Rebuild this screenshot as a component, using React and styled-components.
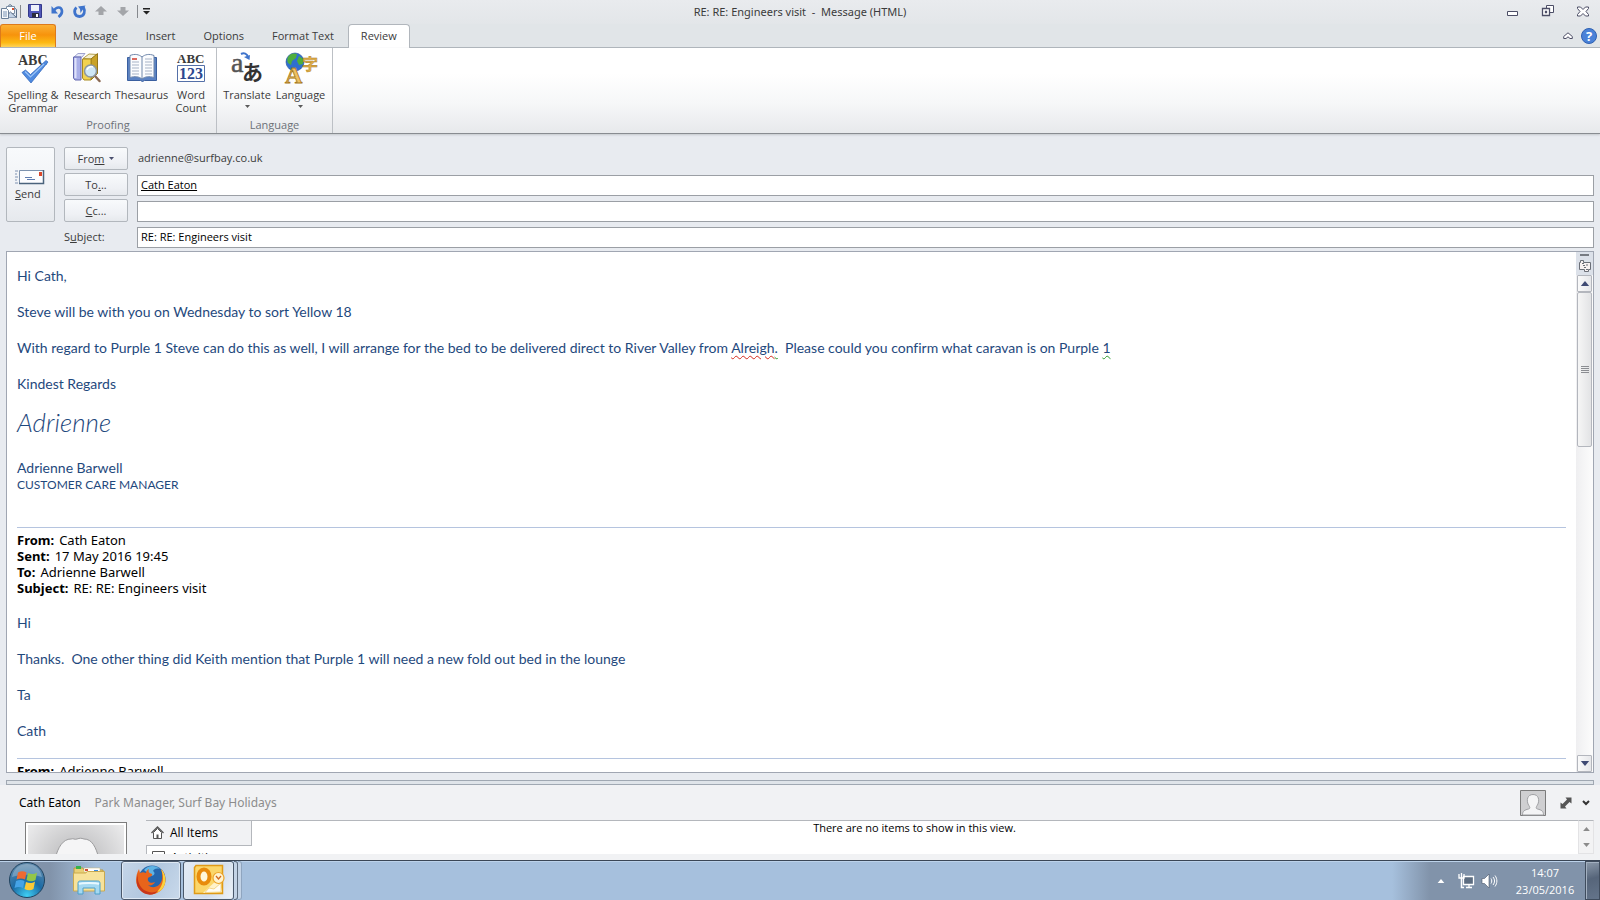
import React, { useState } from 'react'
import styled, { createGlobalStyle } from 'styled-components'

const GlobalStyle = createGlobalStyle`
    * {
        box-sizing: border-box;
    }
    body {
        margin: 0;
        overflow: hidden;
        font-family: "Open Sans", "Noto Sans", sans-serif;
        font-size: 11px;
        color: #3b3b3b;
    }
    button, input {
        font: inherit;
        color: inherit;
        margin: 0;
    }
    svg {
        display: block;
        flex: none;
        overflow: visible;
    }
`

const Screen = styled.div`
    display: flex;
    flex-direction: column;
    height: 100vh;
    background: #e8ebf0;
`

/* ---------- title bar ---------- */

const TitleBar = styled.header`
    display: flex;
    align-items: center;
    height: 24px;
    padding-bottom: 2px;
    background: linear-gradient(#e9ebee, #e3e6e9);
`

const TitleSide = styled.div`
    flex: 1;
    display: flex;
    align-items: center;
    justify-content: ${props => props.$end ? 'flex-end' : 'flex-start'};
`

const Title = styled.h1`
    margin: 0;
    font-family: "Noto Sans", sans-serif;
    font-size: 11px;
    font-weight: 400;
    white-space: pre;
`

const IconButton = styled.button`
    display: flex;
    align-items: center;
    justify-content: center;
    width: ${props => props.$width || 22}px;
    height: 22px;
    padding: 0;
    border: none;
    background: none;
`

const Separator = styled.span`
    width: 1px;
    height: 13px;
    margin: 0 3px;
    background: #85888d;
`

/* ---------- ribbon ---------- */

const TabBar = styled.nav`
    display: flex;
    align-items: stretch;
    height: 24px;
    background: #e1e5e8;
    border-bottom: 1px solid #aeb4ba;
`

const FileTab = styled.button`
    width: 56px;
    margin-right: 3px;
    padding: 0 0 2px;
    border: 1px solid #dd7a1b;
    border-bottom: none;
    border-radius: 3px 3px 0 0;
    color: #fff;
    background: linear-gradient(#fbb034, #f7930c 45%, #fdb913 80%, #ffd257);
`

const Tab = styled.button`
    height: 24px;
    padding: 0 13px 2px;
    border: 1px solid transparent;
    border-bottom: none;
    border-radius: 4px 4px 0 0;
    background: transparent;
    ${props => props.$active ? 'background: #fff; border-color: #b1b6bc; padding: 0 12px 2px;' : ''}
`

const TabEnd = styled.div`
    display: flex;
    align-items: center;
    margin-left: auto;
    padding-right: 1px;
`

const Ribbon = styled.div`
    display: flex;
    height: 86px;
    background: linear-gradient(#fff 30%, #f6f7f8 65%, #e7e9ec);
    border-bottom: 1px solid #888c91;
    box-shadow: 0 1px 2px #c3c7cc;
`

const Group = styled.section`
    display: flex;
    flex-direction: column;
    padding: 0 4px;
    border-right: 1px solid #bcc0c5;
`

const GroupButtons = styled.div`
    display: flex;
    flex: 1;
`

const GroupLabel = styled.div`
    height: 17px;
    line-height: 17px;
    text-align: center;
    color: #6d7178;
`

const BigButton = styled.button`
    display: flex;
    flex-direction: column;
    align-items: center;
    gap: 4px;
    width: ${props => props.$width}px;
    padding: 4px 0 0;
    border: none;
    background: none;
    line-height: 13px;
    white-space: pre;
`

/* ---------- message header ---------- */

const MessageHeader = styled.form`
    display: grid;
    grid-template-columns: 49px 64px 1fr;
    grid-template-rows: repeat(4, 23px);
    column-gap: 9px;
    row-gap: 3px;
    padding: 13px 6px 3px;
`

const SoftButton = styled.button`
    display: flex;
    align-items: center;
    justify-content: center;
    padding: 0;
    border: 1px solid #b2b7bd;
    border-radius: 2px;
    background: linear-gradient(#f8fafc, #eef0f4 70%, #e6e9ed);

    svg {
        margin-left: 5px;
    }
`

const SendButton = styled.button`
    grid-row: 1 / 4;
    display: flex;
    flex-direction: column;
    align-items: flex-start;
    justify-content: center;
    gap: 1px;
    padding: 1px 0 0 8px;
    border: 1px solid #b2b7bd;
    border-radius: 2px;
    background: linear-gradient(#f8fafc, #eef0f4 70%, #e6e9ed);
`

const FieldLabel = styled.label`
    grid-column: 2;
    line-height: 24px;
`

const FromText = styled.span`
    padding-left: 1px;
    line-height: 22px;
`

const Field = styled.input`
    align-self: end;
    width: 100%;
    height: 21px;
    padding: 0 3px 2px;
    border: 1px solid #9b9fa5;
    background: #fff;
    color: #000;
    outline: none;
    text-decoration: ${props => props.$link ? 'underline' : 'none'};
`

/* ---------- editor ---------- */

const Editor = styled.main`
    flex: 1;
    display: flex;
    min-height: 0;
    margin: 0 6px;
    border: 1px solid #a0a6b2;
    background: #fff;
    overflow: hidden;
`

const Body = styled.article`
    flex: 1;
    padding: 15px 10px 0;
    overflow: hidden;
    font-family: Lato, sans-serif;
    font-size: 14px;
    line-height: 18px;
    color: #1f497d;
    white-space: pre-wrap;
    font-variant-ligatures: none;
`

const Para = styled.p`
    margin: 0 0 18px;
`

const Signature = styled.p`
    margin: -4px 0 22px;
    font-size: 26px;
    font-weight: 300;
    font-style: italic;
    line-height: 30px;
`

const SignatureBlock = styled.p`
    margin: 0 0 34px;
    line-height: 17px;
`

const JobTitle = styled.span`
    display: block;
    font-size: 12px;
`

const Squiggle = styled.span`
    text-decoration: underline wavy ${props => props.$color} 1px;
    text-underline-offset: 2px;
`

const Quoted = styled.dl`
    margin: 0 0 18px;
    padding-top: 4px;
    border-top: 1px solid #b5c4df;
    font-family: "Noto Sans", sans-serif;
    font-size: 13px;
    line-height: 16px;
    color: #000;
`

const QuotedLine = styled.div`
    display: flex;
    gap: 5px;

    dt {
        font-weight: 700;
    }
    dd {
        margin: 0;
    }
`

const ScrollBar = styled.div`
    display: flex;
    flex-direction: column;
    align-items: center;
    width: 17px;
    background: linear-gradient(90deg, #efeff1, #fcfcfc);
`

const ScrollTools = styled.div`
    display: flex;
    flex-direction: column;
    align-items: center;
    gap: 4px;
    width: 100%;
    height: 23px;
    padding-top: 2px;
    background: #dce1e9;
`

const ScrollButton = styled.button`
    display: flex;
    align-items: center;
    justify-content: center;
    width: 15px;
    height: 17px;
    padding: 0;
    border: 1px solid #b3b6bd;
    border-radius: 1px;
    background: linear-gradient(90deg, #fafafa, #e6e7ea);
`

const Thumb = styled.div`
    display: flex;
    flex-direction: column;
    align-items: center;
    justify-content: center;
    width: 15px;
    height: 155px;
    margin-bottom: auto;
    border: 1px solid #b3b6bd;
    border-radius: 2px;
    background: linear-gradient(90deg, #f6f6f6, #e2e3e5);
`

/* ---------- people pane ---------- */

const Splitter = styled.div`
    height: 5px;
    margin: 7px 6px 0;
    border: 1px solid #a0a8b2;
    background: #dfe4e9;
`

const PeoplePane = styled.section`
    height: 75px;
    padding: 0 6px 6px;
    background: #f1f2f4;
    display: flex;
    flex-direction: column;
`

const PersonRow = styled.div`
    display: flex;
    align-items: center;
    gap: 14px;
    height: 35px;
    padding: 0 2px 0 13px;
    font-family: "Noto Sans", sans-serif;
    font-size: 12px;
    color: #000;
`

const Role = styled.span`
    flex: 1;
    color: #8c8c8c;
`

const PersonActions = styled.div`
    display: flex;
    align-items: center;
`

const Details = styled.div`
    display: flex;
    flex: 1;
    min-height: 0;
    overflow: hidden;
`

const Photo = styled.div`
    width: 102px;
    height: 102px;
    margin: 2px 19px 0;
    padding: 2px;
    border: 1px solid #7d7d7d;
    background: #fff;
`

const Filters = styled.div`
    width: 106px;
    border-top: 1px solid #b4b7bc;
    font-size: 12px;
    color: #000;
`

const Filter = styled.button`
    display: flex;
    align-items: center;
    gap: 6px;
    width: 100%;
    height: 24px;
    padding: 0 5px 1px;
    border: none;
    background: ${props => props.$active ? '#f1f2f4' : '#fff'};
    ${props => props.$active ? 'border-right: 1px solid #b4b7bc;' : 'border-top: 1px solid #b4b7bc; border-left: 1px solid #b4b7bc;'}
`

const Items = styled.div`
    flex: 1;
    padding-right: 1px;
    border-top: 1px solid #b4b7bc;
    background: #fff;
    color: #000;
    text-align: center;
    line-height: 14px;
`

const MiniScroll = styled.div`
    display: flex;
    flex-direction: column;
    align-items: center;
    justify-content: space-around;
    width: 16px;
    border: 1px solid #e3e3e5;
    border-top-color: #b4b7bc;
    background: #f3f3f4;
`

/* ---------- taskbar ---------- */

const TaskBar = styled.footer`
    display: flex;
    align-items: stretch;
    height: 40px;
    border-top: 1px solid #3a4656;
    box-shadow: inset 0 1px #bcd2ea;
    background: linear-gradient(90deg, #8193aa, #8193aa 50px, #a6c0dd 96px, #a6c0dd calc(100% - 208px), #8193aa calc(100% - 170px));
`

const TaskButton = styled.button`
    display: flex;
    align-items: center;
    justify-content: center;
    width: ${props => props.$width}px;
    padding: 0 0 2px;
    border: 1px solid ${props => props.$open ? '#4a586b' : 'transparent'};
    border-radius: 3px;
    background: ${props => props.$open
        ? (props.$current ? 'linear-gradient(120deg, #e3ebf5, #d3deec 60%, #eef3f9)' : 'linear-gradient(120deg, #c5d5e8, #b3c8df 50%, #c9d9eb)')
        : 'none'};
    box-shadow: ${props => props.$open ? 'inset 0 0 0 1px #dfe9f4' : 'none'};
    margin-right: ${props => props.$gap || 0}px;
`

const Stack = styled.span`
    width: 4px;
    border: 1px solid ${props => props.$faint ? '#8fa5bf' : '#5c6b7e'};
    border-left: none;
    border-radius: 0 3px 3px 0;
    background: #c3d3e6;
`

const Tray = styled.div`
    display: flex;
    align-items: center;
    margin-left: auto;
`

const Clock = styled.time`
    width: 80px;
    margin-left: 5px;
    font-size: 11px;
    line-height: 17px;
    text-align: center;
    color: #fff;
`

const ShowDesktop = styled.button`
    align-self: stretch;
    width: 15px;
    padding: 0;
    border: 1px solid #3f4c5d;
    background: linear-gradient(165deg, #8b99aa, #56657a 45%, #64748a);
    box-shadow: inset 1px 1px #a3b0c0;
`

/* ---------- icons ---------- */

const MailIcon = () => (
    <svg width="17" height="16" viewBox="0 0 17 16">
        <path d="M4.5 6.500 10 1.500l6.500 5v8h-12z" fill="#dfe9f3" stroke="#5c6f88" />
        <path d="M6.500 3.500h8v7h-8z" fill="#fff" stroke="#7d90a6" />
        <path d="M12 5h2v2h-2z" fill="#d8502f" />
        <path d="M4.500 14.500 10.500 9l6 5.500" fill="#c3d3e6" stroke="#5c6f88" />
        <path d="M1.500 5.500h5l2 2v8h-7z" fill="#f7fafc" stroke="#6a7e97" />
        <path d="M3 9h4M3 11h4M3 13h4" stroke="#7b93b4" />
    </svg>
)

const SaveIcon = () => (
    <svg width="14" height="14" viewBox="0 0 14 14">
        <path d="M.5.5h13v13h-12l-1-1z" fill="#5057b8" stroke="#33388a" />
        <path d="M3 1h8v6H3z" fill="#eef1fa" />
        <path d="M4 9h7v4.500H4z" fill="#2b2d3c" />
        <path d="M8 10h2v3H8z" fill="#fff" />
    </svg>
)

const UndoIcon = () => (
    <svg width="13" height="13" viewBox="0 0 13 13">
        <path d="M3 5.500C5.500 1.500 10.500 1.500 11 6c.2 2.500-1.500 4.500-3.500 6" fill="none" stroke="#3f74cc" strokeWidth="2.600" />
        <path d="M.5 1v7.500H7z" fill="#3f74cc" />
    </svg>
)

const RedoIcon = () => (
    <svg width="13" height="13" viewBox="0 0 13 13">
        <path d="M3.500 2.500C.5 5 1 11.500 6.500 11.500c5 0 6-5.500 4-9" fill="none" stroke="#3f74cc" strokeWidth="2.800" />
        <path d="M5 1.500 12.500.5l-2 3-3 4.500-.5-4z" fill="#3f74cc" />
    </svg>
)

const ArrowIcon = ({ down }) => (
    <svg width="12" height="10" viewBox="0 0 12 10">
        <path d={down ? 'M3.500 1h5v3.500H12L6 10 0 4.500h3.500z' : 'M6 0l6 5.500H8.500V9h-5V5.500H0z'} fill="#a3a5a9" />
    </svg>
)

const Caret = ({ up, width = 5, color = '#5a5a5a' }) => (
    <svg width={width} height={Math.ceil(width / 2)} viewBox="0 0 10 6">
        <path d={up ? 'M0 6h10L5 0z' : 'M0 0h10L5 6z'} fill={color} />
    </svg>
)

const QatMenuIcon = () => (
    <svg width="7" height="7" viewBox="0 0 7 7">
        <path d="M0 0h7v1.500H0zM0 3h7L3.500 6.500z" fill="#222" />
    </svg>
)

const SpellingIcon = () => (
    <svg width="32" height="32" viewBox="0 0 32 32">
        <text x="1" y="13" fontFamily="Liberation Serif, serif" fontWeight="700" fontSize="14" fill="#3a3a3a">ABC</text>
        <path d="M5 20.500 8.500 18l5 4.500L29 8.500 31 10 14 31z" fill="#4f8be0" stroke="#2d62b8" strokeWidth=".7" />
        <path d="M8 19.500 13.500 25 27 12" fill="none" stroke="#9cc4f6" strokeWidth="1.200" />
    </svg>
)

const ResearchIcon = () => (
    <svg width="32" height="32" viewBox="0 0 32 32">
        <path d="M2 5 6 1.500h7L10 5z" fill="#e9ecfa" stroke="#8a8fc4" strokeWidth=".8" />
        <path d="M1.500 5H9v23H3l-1.500-2z" fill="#a9afe8" stroke="#6469b0" />
        <path d="M3.500 6v20" stroke="#dfe2fa" strokeWidth="2" />
        <path d="M11 6.500 17 2l8.500.5L19 7z" fill="#f6f0cf" stroke="#a28a2b" strokeWidth=".8" />
        <path d="M19 7 25.500 1.500v20L19 28z" fill="#c9a328" stroke="#94761a" />
        <path d="M10.500 7H19v21h-7l-1.500-2z" fill="#f2d250" stroke="#a78921" />
        <path d="m23 24 4.500 5" stroke="#8a6a53" strokeWidth="2.500" strokeLinecap="round" />
        <circle cx="18.500" cy="19" r="6" fill="#cfe7f5" stroke="#8c979f" strokeWidth="1.500" />
        <path d="M15 18c1-3 4-4 6-3" fill="none" stroke="#fff" strokeWidth="1.500" />
    </svg>
)

const ThesaurusIcon = () => (
    <svg width="32" height="32" viewBox="0 0 32 32">
        <path d="M1.500 5.500h29v23h-12l-2 1-2-1h-13z" fill="#5b82c3" stroke="#3a5f9f" />
        <path d="M4 3.500c5-2 9-1 12 1.500 3-2.500 7-3.500 12-1.500v22c-5-1.500-9-1-12 1.500-3-2.500-7-3-12-1.500z" fill="#fbfcfe" stroke="#6f87ab" />
        <path d="M16 5v22" stroke="#7088ab" />
        <path d="M6 7h5" stroke="#d03a2c" strokeWidth="1.500" />
        <path d="M6 10h7M6 13h7M6 16h7M6 19h7M6 22h7M19 7h7M19 10h7M19 13h7M19 16h7M19 19h7M19 22h7" stroke="#a7b3c6" />
    </svg>
)

const WordCountIcon = () => (
    <svg width="32" height="32" viewBox="0 0 32 32">
        <text x="2" y="11" fontFamily="Liberation Serif, serif" fontWeight="700" fontSize="13" fill="#3a3a3a">ABC</text>
        <path d="M2.500 13.500h27v16h-27z" fill="#fff" stroke="#5470a8" />
        <text x="4" y="27" fontFamily="Liberation Serif, serif" fontWeight="700" fontSize="16" fill="#2c4890">123</text>
    </svg>
)

const TranslateIcon = () => (
    <svg width="32" height="32" viewBox="0 0 32 32">
        <text x="0" y="20" fontFamily="Liberation Serif, serif" fontWeight="400" fontSize="28" fill="#555" stroke="#555" strokeWidth=".5">a</text>
        <text x="11" y="28" fontFamily="Noto Sans CJK JP, sans-serif" fontWeight="700" fontSize="21" fill="#333">あ</text>
        <path d="M10 2c3-1.500 6-.5 7 3" fill="none" stroke="#3f74cc" strokeWidth="2" />
        <path d="m13 5 6-2-.5 5z" fill="#3f74cc" />
    </svg>
)

const LanguageIcon = () => (
    <svg width="32" height="32" viewBox="0 0 32 32">
        <circle cx="10" cy="10" r="9" fill="#2f6fd0" stroke="#1e4b94" strokeWidth=".6" />
        <path d="M3 5c2-4 7-4 9-3l-1 4-4 3-1 4-3-2c-1-2-1-4 0-6zM14 4l4 3v5l-4 1-2-4z" fill="#4fae3d" />
        <text x="17" y="18" fontFamily="Noto Sans CJK JP, sans-serif" fontWeight="700" fontSize="16" fill="#e2b04a" stroke="#a87a22" strokeWidth=".4">字</text>
        <text x="0" y="31" fontFamily="Liberation Serif, serif" fontWeight="700" fontSize="24" fill="#efc163" stroke="#a87a22" strokeWidth=".8">A</text>
    </svg>
)

const EnvelopeIcon = () => (
    <svg width="30" height="15" viewBox="0 0 30 15">
        <path d="M0 1h3M0 4h2M0 7h3M0 10h2M0 13h3" stroke="#7f92b2" />
        <path d="M4.500.5h24v13h-24z" fill="#fdfdff" stroke="#7d92ae" />
        <path d="M28.500 0v13.500H4" fill="none" stroke="#4b637c" strokeWidth="1.500" />
        <path d="M24 2h3v4h-3z" fill="#d9472b" />
        <path d="M10 7.500h7M12 9.500h8" stroke="#5f7cb0" />
    </svg>
)

const MinimizeIcon = () => (
    <svg width="11" height="12" viewBox="0 0 11 12">
        <path d="M.5 6.500h10v4H.5z" fill="#fff" stroke="#4c4e66" />
    </svg>
)

const RestoreIcon = () => (
    <svg width="12" height="12" viewBox="0 0 12 12">
        <path d="M4.500.5h7v7h-7z" fill="#fff" stroke="#4c4e66" />
        <path d="M.5 3.500h7v7h-7zM3.500 6.500h1v1h-1z" fill="#fff" stroke="#4c4e66" strokeWidth="1.300" />
    </svg>
)

const CloseIcon = () => (
    <svg width="12" height="11" viewBox="0 0 12 11">
        <path d="M.5 1h3L6 3.500 8.500 1h3v1.500L9 5.500l2.500 3V10h-3L6 7.500 3.500 10h-3V8.500L3 5.500.5 2.500z" fill="#fff" stroke="#4c4e66" />
    </svg>
)

const CollapseIcon = () => (
    <svg width="10" height="8" viewBox="0 0 10 8">
        <path d="M5 .8 9.300 4.500v2H7L5 4.800 3 6.500H.7v-2z" fill="#fff" stroke="#4c4e66" />
    </svg>
)

const HelpIcon = () => (
    <svg width="16" height="16" viewBox="0 0 16 16">
        <circle cx="8" cy="8" r="7.500" fill="#4a82d8" stroke="#2f61b2" />
        <text x="8" y="13" textAnchor="middle" fontFamily="Open Sans, sans-serif" fontWeight="700" fontSize="13" fill="#fff">?</text>
    </svg>
)

const BrowseIcon = () => (
    <svg width="12" height="13" viewBox="0 0 12 13">
        <path d="M.5 2.500h1v-2h3v2h7v7h-2v2h-4v-2h-5z" fill="#f8f2f2" stroke="#6b6f77" />
        <path d="M3 3.500h2M4 5.500h2M5 7.500h2M8 4v2M7 9.500h2" stroke="#6b6f77" />
    </svg>
)

const GripIcon = () => (
    <svg width="8" height="7" viewBox="0 0 8 7">
        <path d="M0 .5h8M0 2.500h8M0 4.500h8M0 6.500h8" stroke="#8b8d92" />
    </svg>
)

const AvatarIcon = () => (
    <svg width="26" height="26" viewBox="0 0 26 26">
        <path d="M.5.5h25v25H.5z" fill="#cfcfd1" stroke="#7b7b7b" />
        <path d="M2.500 25c0-4 2-5 6-6 2-.5 1.500-2 0-4-2.500-5-1-10.500 4.500-10.500S20 10 17.500 15c-1.500 2-2 3.500 0 4 4 1 6 2 6 6z" fill="#f4f4f5" stroke="#9fa0a3" />
    </svg>
)

const ExpandIcon = () => (
    <svg width="12" height="12" viewBox="0 0 12 12">
        <path d="M11.500.5v6L9.500 5 5 9.500l1.500 2h-6v-6L2.500 7 7 2.500 5.500.5z" fill="#555" />
    </svg>
)

const ChevronIcon = () => (
    <svg width="8" height="6" viewBox="0 0 8 6">
        <path d="M1 1l3 3 3-3" fill="none" stroke="#333" strokeWidth="2" />
    </svg>
)

const PhotoIcon = () => (
    <svg width="96" height="96" viewBox="0 0 96 96">
        <defs>
            <radialGradient id="photo" cx=".5" cy=".4" r=".6">
                <stop offset="0" stopColor="#b3b3b5" />
                <stop offset="1" stopColor="#e9e9ea" />
            </radialGradient>
        </defs>
        <path d="M0 0h96v96H0z" fill="url(#photo)" />
        <path d="M27 34c3-12 8-20 16-20 3-1 3 1 6 0s4-1 7 0c8 0 12 8 15 20v62H27z" fill="#f5f5f6" stroke="#9c9c9e" />
    </svg>
)

const HomeIcon = () => (
    <svg width="13" height="13" viewBox="0 0 13 13">
        <path d="M.5 7 6.500 1l6 6" fill="none" stroke="#555" strokeWidth="1.300" />
        <path d="M2.500 6.500v6h8v-6l-4-4z" fill="#fff" stroke="#555" />
        <path d="M5.500 8.500h2v4h-2z" fill="#555" />
    </svg>
)

const BoxIcon = () => (
    <svg width="13" height="13" viewBox="0 0 13 13">
        <path d="M.5.5h12v12H.5z" fill="#fff" stroke="#555" />
    </svg>
)

const StartIcon = () => (
    <svg width="38" height="38" viewBox="0 0 38 38">
        <defs>
            <radialGradient id="orb" cx=".5" cy=".95" r=".9">
                <stop offset="0" stopColor="#3fd0f5" />
                <stop offset=".5" stopColor="#1b6ba5" />
                <stop offset="1" stopColor="#5d88ab" />
            </radialGradient>
        </defs>
        <circle cx="19" cy="19" r="17.500" fill="url(#orb)" stroke="#21435f" />
        <path d="M4 16C6 6 13 3 19 3s13 3 15 13c-10-3-20-3-30 0z" fill="#fff" opacity=".25" />
        <path d="M10 11.500c3-2 6-1.500 8.500 0L17 18.500c-3-1.500-5.500-1.500-8.500 0z" fill="#ee6a31" />
        <path d="M20 12c3 1.500 6 1.500 9-.5l-1.500 7.500c-3 2-6 1.500-9 0z" fill="#93c647" />
        <path d="M8 20c3-1.500 6-1.500 8.500 0L15 27c-3-1.500-5.500-1.500-8.500 0z" fill="#45a3e6" />
        <path d="M18 21c3 1.500 6 1.500 9-.5L25.500 28c-3 2-6 1.500-9 0z" fill="#fbc936" />
    </svg>
)

const ExplorerIcon = () => (
    <svg width="34" height="32" viewBox="0 0 34 32">
        <path d="M2 4h9l1 2h19v20H2z" fill="#e9cf77" stroke="#bb9b40" />
        <path d="M4 2h5v3H4z" fill="#35b24a" />
        <path d="M12 4h16v4H12z" fill="#fff" stroke="#cbb673" strokeWidth=".5" />
        <path d="M13 5h3v2h-3z" fill="#d24b35" />
        <path d="M22 6h4v2h-4z" fill="#3b8be0" />
        <path d="M1.500 9h12l2-1.500h17V27h-31z" fill="#f7e29b" stroke="#c9a94f" />
        <path d="M6 20c0-3 1-3 3-3h16c2 0 3 0 3 3v10h-5v-6H11v6H6z" fill="#a5d9f1" stroke="#4d9fc9" />
        <path d="M7 20c3-1.500 17-1.500 20 0" fill="none" stroke="#e8f8ff" strokeWidth="2" />
    </svg>
)

const FirefoxIcon = () => (
    <svg width="32" height="32" viewBox="0 0 32 32">
        <circle cx="17" cy="15" r="13.500" fill="#2566ad" />
        <path d="M9 6c4-5 12-5 16-1-4-1-6 0-7 2 3 2 1 5-2 5z" fill="#5fb3e4" />
        <path d="M26 5c5 5 6 13 2 19C23 31 12 33 5 26 0 21 0 12 4 5l1 4c2-1 4-1 6 0 0-2 1-3 3-4-1 3 0 4 3 5 1 2-3 3-4 4-1 4 3 6 7 4-1 3-5 4-7 3 5 5 13 1 14-6 .5-4 0-7-1-10z" fill="#e8641b" />
        <path d="M26 5c5 5 6 13 2 19-2 3-5 4-7 5 5-5 7-10 7-15 0-4-1-6-2-9z" fill="#fbd13c" />
        <path d="M3 10c-1 6 1 12 6 16 5 3 10 3 14 1-4 5-13 5-18-1-4-4-4-11-2-16z" fill="#c8371a" />
    </svg>
)

const OutlookIcon = () => (
    <svg width="32" height="32" viewBox="0 0 32 32">
        <path d="M3 1.500h26.500v28H1.500v-26z" fill="#fbd66a" stroke="#e09a17" strokeWidth="1.500" />
        <path d="M10 29l16-15 3 14z" fill="#fff3cb" />
        <path d="M12 28.500 16 24l5 1 7-6v9z" fill="#fffdf5" stroke="#edbd55" strokeWidth=".6" />
        <ellipse cx="11" cy="12.500" rx="5.500" ry="7" fill="#fff7da" stroke="#e88b0c" strokeWidth="4" />
        <circle cx="25.500" cy="14" r="5.500" fill="#fff3cf" stroke="#eda52a" strokeWidth="1.200" />
        <path d="m23 12 2.500 3 2.500-3" fill="none" stroke="#d2691e" strokeWidth="1.300" />
    </svg>
)

const NetworkIcon = () => (
    <svg width="16" height="16" viewBox="0 0 16 16">
        <path d="M5.500 3.500h10v8h-10zM8 14.500h6M11 12v2" fill="#5d6d81" stroke="#fff" strokeWidth="1.300" />
        <path d="M1 1v4h5V1M3.500 0v5" fill="none" stroke="#fff" strokeWidth="1.300" />
        <path d="M3.500 5v9.500H6" fill="none" stroke="#fff" strokeWidth="1.500" />
    </svg>
)

const SpeakerIcon = () => (
    <svg width="16" height="16" viewBox="0 0 16 16">
        <path d="M1 5.500h2.500L8 1v14l-4.500-4.500H1z" fill="#fff" stroke="#48566a" strokeWidth=".6" />
        <path d="M10 5.500c1 1.500 1 3.500 0 5M12 4c2 2.500 2 5.500 0 8M14 2.500c2.500 3.500 2.500 7.500 0 11" fill="none" stroke="#fff" />
    </svg>
)

const tabs = ['Message', 'Insert', 'Options', 'Format Text', 'Review']

const groups = [
    {
        name: 'Proofing',
        buttons: [
            { label: 'Spelling &\nGrammar', width: 58, icon: <SpellingIcon /> },
            { label: 'Research', width: 51, icon: <ResearchIcon /> },
            { label: 'Thesaurus', width: 57, icon: <ThesaurusIcon /> },
            { label: 'Word\nCount', width: 42, icon: <WordCountIcon /> },
        ],
    },
    {
        name: 'Language',
        buttons: [
            { label: 'Translate', width: 52, icon: <TranslateIcon />, menu: true },
            { label: 'Language', width: 55, icon: <LanguageIcon />, menu: true },
        ],
    },
]

const QuotedHeader = ({ lines }) => (
    <Quoted>
        {lines.map(([name, value]) =>
            <QuotedLine key={name}><dt>{name}:</dt><dd>{value}</dd></QuotedLine>
        )}
    </Quoted>
)

export default function App() {
    const [tab, setTab] = useState('Review')
    const [cc, setCc] = useState('')
    const [subject, setSubject] = useState('RE: RE: Engineers visit')

    return (
        <Screen>
            <GlobalStyle />
            <TitleBar>
                <TitleSide>
                    <MailIcon />
                    <Separator />
                    <IconButton aria-label="Save"><SaveIcon /></IconButton>
                    <IconButton aria-label="Undo"><UndoIcon /></IconButton>
                    <IconButton aria-label="Redo"><RedoIcon /></IconButton>
                    <IconButton aria-label="Previous item"><ArrowIcon /></IconButton>
                    <IconButton aria-label="Next item"><ArrowIcon down /></IconButton>
                    <Separator />
                    <IconButton $width={10} aria-label="Customize toolbar"><QatMenuIcon /></IconButton>
                </TitleSide>
                <Title>RE: RE: Engineers visit  -  Message (HTML)</Title>
                <TitleSide $end>
                    <IconButton $width={35} aria-label="Minimize"><MinimizeIcon /></IconButton>
                    <IconButton $width={35} aria-label="Restore"><RestoreIcon /></IconButton>
                    <IconButton $width={35} aria-label="Close"><CloseIcon /></IconButton>
                </TitleSide>
            </TitleBar>

            <TabBar>
                <FileTab>File</FileTab>
                {tabs.map(name =>
                    <Tab key={name} $active={name === tab} onClick={() => setTab(name)}>{name}</Tab>
                )}
                <TabEnd>
                    <IconButton aria-label="Minimize the ribbon"><CollapseIcon /></IconButton>
                    <IconButton $width={20} aria-label="Help"><HelpIcon /></IconButton>
                </TabEnd>
            </TabBar>

            <Ribbon>
                {groups.map(group =>
                    <Group key={group.name}>
                        <GroupButtons>
                            {group.buttons.map(button =>
                                <BigButton key={button.label} $width={button.width}>
                                    {button.icon}
                                    <span>{button.label}</span>
                                    {button.menu && <Caret />}
                                </BigButton>
                            )}
                        </GroupButtons>
                        <GroupLabel>{group.name}</GroupLabel>
                    </Group>
                )}
            </Ribbon>

            <MessageHeader onSubmit={e => e.preventDefault()}>
                <SendButton type="submit">
                    <EnvelopeIcon />
                    <span><u>S</u>end</span>
                </SendButton>
                <SoftButton type="button"><span>Fro<u>m</u></span><Caret color="#4a4f6e" /></SoftButton>
                <FromText>adrienne@surfbay.co.uk</FromText>
                <SoftButton type="button"><span>To<u>.</u>..</span></SoftButton>
                <Field $link aria-label="To" defaultValue="Cath Eaton" />
                <SoftButton type="button"><span><u>C</u>c...</span></SoftButton>
                <Field aria-label="Cc" value={cc} onChange={e => setCc(e.target.value)} />
                <FieldLabel htmlFor="subject">S<u>u</u>bject:</FieldLabel>
                <Field id="subject" value={subject} onChange={e => setSubject(e.target.value)} />
            </MessageHeader>

            <Editor>
                <Body>
                    <Para>Hi Cath,</Para>
                    <Para>Steve will be with you on Wednesday to sort Yellow 18</Para>
                    <Para>
                        With regard to Purple 1 Steve can do this as well, I will arrange for the bed to be delivered direct to River Valley from <Squiggle $color="#d42a1c">Alreigh</Squiggle><Squiggle $color="#2e9b2e">.</Squiggle>{'  '}Please could you confirm what caravan is on Purple <Squiggle $color="#2e9b2e">1</Squiggle>
                    </Para>
                    <Para>Kindest Regards</Para>
                    <Signature>Adrienne</Signature>
                    <SignatureBlock>Adrienne Barwell<JobTitle>CUSTOMER CARE MANAGER</JobTitle></SignatureBlock>
                    <QuotedHeader lines={[
                        ['From', 'Cath Eaton'],
                        ['Sent', '17 May 2016 19:45'],
                        ['To', 'Adrienne Barwell'],
                        ['Subject', 'RE: RE: Engineers visit'],
                    ]} />
                    <Para>Hi</Para>
                    <Para>Thanks.  One other thing did Keith mention that Purple 1 will need a new fold out bed in the lounge</Para>
                    <Para>Ta</Para>
                    <Para>Cath</Para>
                    <QuotedHeader lines={[['From', 'Adrienne Barwell']]} />
                </Body>
                <ScrollBar>
                    <ScrollTools>
                        <svg width="9" height="2"><path d="M0 1h9" stroke="#777b82" strokeWidth="2" /></svg>
                        <BrowseIcon />
                    </ScrollTools>
                    <ScrollButton aria-label="Scroll up"><Caret up width={10} color="#3f4a73" /></ScrollButton>
                    <Thumb><GripIcon /></Thumb>
                    <ScrollButton aria-label="Scroll down"><Caret width={10} color="#3f4a73" /></ScrollButton>
                </ScrollBar>
            </Editor>

            <Splitter />
            <PeoplePane>
                <PersonRow>
                    <span>Cath Eaton</span>
                    <Role>Park Manager, Surf Bay Holidays</Role>
                    <PersonActions>
                        <IconButton $width={38} aria-label="Cath Eaton"><AvatarIcon /></IconButton>
                        <IconButton $width={28} aria-label="Expand"><ExpandIcon /></IconButton>
                        <IconButton $width={12} aria-label="Collapse pane"><ChevronIcon /></IconButton>
                    </PersonActions>
                </PersonRow>
                <Details>
                    <Photo><PhotoIcon /></Photo>
                    <Filters>
                        <Filter $active><HomeIcon />All Items</Filter>
                        <Filter><BoxIcon />Activities</Filter>
                    </Filters>
                    <Items>There are no items to show in this view.</Items>
                    <MiniScroll>
                        <Caret up width={7} color="#8b8b8b" />
                        <Caret width={7} color="#8b8b8b" />
                    </MiniScroll>
                </Details>
            </PeoplePane>

            <TaskBar>
                <TaskButton $width={54} $gap={6} aria-label="Start"><StartIcon /></TaskButton>
                <TaskButton $width={58} $gap={3} aria-label="Explorer"><ExplorerIcon /></TaskButton>
                <TaskButton $width={60} $gap={2} $open aria-label="Firefox"><FirefoxIcon /></TaskButton>
                <TaskButton $width={51} $open $current aria-label="Outlook"><OutlookIcon /></TaskButton>
                <Stack />
                <Stack $faint />
                <Tray>
                    <IconButton $width={26} aria-label="Show hidden icons"><Caret up width={8} color="#fff" /></IconButton>
                    <IconButton $width={24} aria-label="Network"><NetworkIcon /></IconButton>
                    <IconButton $width={22} aria-label="Volume"><SpeakerIcon /></IconButton>
                    <Clock>14:07<br />23/05/2016</Clock>
                    <ShowDesktop aria-label="Show desktop" />
                </Tray>
            </TaskBar>
        </Screen>
    )
}
